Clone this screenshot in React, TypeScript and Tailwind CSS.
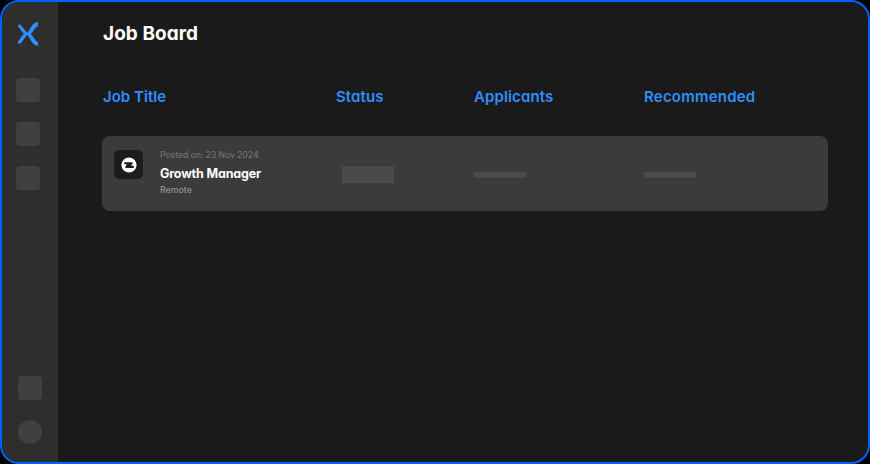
const columns = [
  { label: "Job Title", tracking: "tracking-[0.02px]" },
  { label: "Status", tracking: "tracking-[0.1px]" },
  { label: "Applicants", tracking: "tracking-[0.12px]" },
  { label: "Recommended", tracking: "tracking-[0.22px]" },
];

function Logo() {
  return (
    <svg width="24" height="26" viewBox="0 0 24 26" fill="#2f8fff" className="block">
      <path d="M2 3.8H4.7L9.4 9.7Q11 11.9 12.2 12.8Q11 13.8 9.4 16L4.7 22.4H2V20.6L6 15Q7 13.5 7.8 12.8Q7 12 6 10.6L2 5.6Z" />
      <path d="M22 1V5Q19.8 5.8 18.2 8.6Q16.6 11.4 14.8 12.9Q16.6 14.4 18.2 17.4Q19.8 20.2 22 21.2V25Q18 24.8 15.6 20.6L13.2 16.6Q11.6 14 9.8 12.8Q11.6 11.6 13.2 9.2L15.6 5.2Q18 1.2 22 1Z" />
    </svg>
  );
}

function CompanyBadge() {
  return (
    <div className="mt-[14px] flex size-[29px] shrink-0 items-center justify-center rounded-[5px] bg-[#1c1c1c]">
      <svg width="16" height="16" viewBox="0 0 16 16">
        <circle cx="8" cy="8" r="7.6" fill="#fff" />
        <path d="M3.2 5.2H11.6V6.6L10.2 8.8H12.8V11H4.4V9.4L5.8 7.3H3.2Z" fill="#1c1c1c" />
      </svg>
    </div>
  );
}

function Sidebar() {
  return (
    <aside className="flex w-14 shrink-0 flex-col bg-[#2e2e2e]">
      <div className="mt-[19px] ml-[14px] h-[26px]">
        <Logo />
      </div>
      <div className="mt-[31px] ml-[14px] flex flex-col gap-5">
        <div className="size-6 rounded-[4px] bg-[#404040]" />
        <div className="size-6 rounded-[4px] bg-[#404040]" />
        <div className="size-6 rounded-[4px] bg-[#404040]" />
      </div>
      <div className="mt-auto mb-[18px] ml-4 flex flex-col gap-5">
        <div className="size-6 rounded-[4px] bg-[#404040]" />
        <div className="size-6 rounded-full bg-[#404040]" />
      </div>
    </aside>
  );
}

export default function App() {
  return (
    <div className="h-[464px] w-[870px] bg-black font-['Inter','Noto_Sans',sans-serif] [font-feature-settings:'cv11']">
      <div className="flex h-full overflow-hidden rounded-[19px] border-2 border-[#0062ff] bg-[#1a1a1a]">
        <Sidebar />
        <main className="flex flex-1 flex-col pt-5 pr-10 pl-11">
          <h1 className="h-6 pl-px text-[19px] leading-6 font-bold tracking-[0.05px] whitespace-nowrap text-white">Job Board</h1>
          <div className="mt-[41px] grid h-5 grid-cols-[234px_138px_170px_1fr]">
            {columns.map((c) => (
              <div key={c.label} className={`text-[15px] leading-5 font-semibold whitespace-nowrap text-[#2f8fff] first:pl-px ${c.tracking}`}>
                {c.label}
              </div>
            ))}
          </div>
          <div className="mt-[29px] grid h-[75px] grid-cols-[240px_132px_170px_1fr] rounded-[8px] bg-[#3b3b3b]">
            <div className="flex pl-3">
              <CompanyBadge />
              <div className="ml-[17px] whitespace-nowrap">
                <p className="mt-[13px] h-3 text-[8.75px] leading-3 font-medium tracking-[-0.12px] text-[#707070]">Posted on: 23 Nov 2024</p>
                <p className="mt-[5px] h-4 text-[12.5px] leading-4 font-bold tracking-[-0.17px] text-white">Growth Manager</p>
                <p className="mt-[2px] h-3 text-[8.75px] leading-3 font-medium text-[#939393]">Remote</p>
              </div>
            </div>
            <div className="mt-[30px] h-[17px] w-[52px] bg-[#4a4a4a]" />
            <div className="mt-9 h-[6px] w-[52px] bg-[#4a4a4a]" />
            <div className="mt-9 h-[6px] w-[52px] bg-[#4a4a4a]" />
          </div>
        </main>
      </div>
    </div>
  );
}
